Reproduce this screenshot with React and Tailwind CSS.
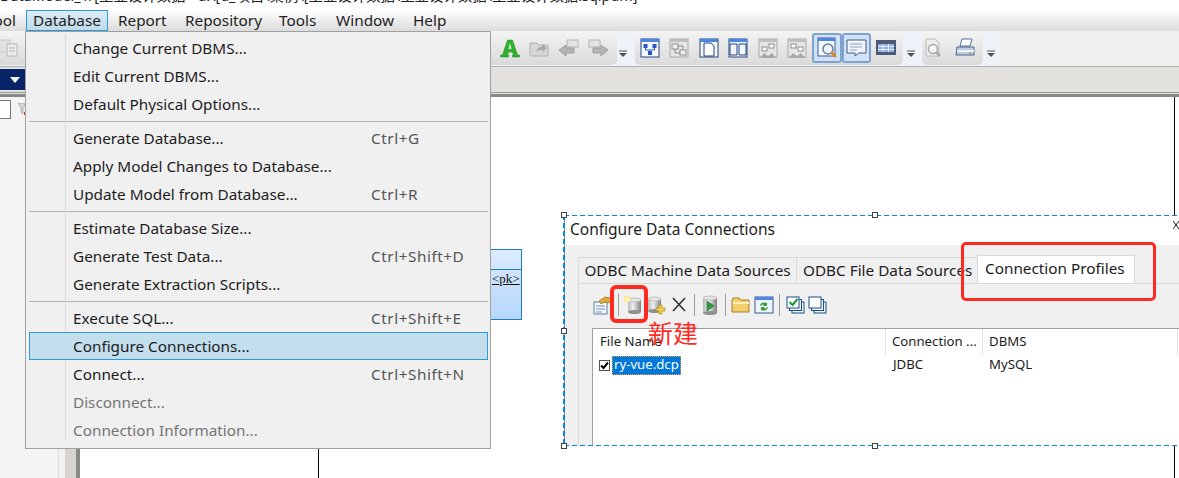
import React from 'react';

const UI_FONT = 'font-["Noto_Sans","Open_Sans",sans-serif]';

const MENU_GROUPS = [
  [
    { label: 'Change Current DBMS...' },
    { label: 'Edit Current DBMS...' },
    { label: 'Default Physical Options...' },
  ],
  [
    { label: 'Generate Database...', keys: 'Ctrl+G' },
    { label: 'Apply Model Changes to Database...' },
    { label: 'Update Model from Database...', keys: 'Ctrl+R' },
  ],
  [
    { label: 'Estimate Database Size...' },
    { label: 'Generate Test Data...', keys: 'Ctrl+Shift+D' },
    { label: 'Generate Extraction Scripts...' },
  ],
  [
    { label: 'Execute SQL...', keys: 'Ctrl+Shift+E' },
    { label: 'Configure Connections...', active: true },
    { label: 'Connect...', keys: 'Ctrl+Shift+N' },
    { label: 'Disconnect...', disabled: true },
    { label: 'Connection Information...', disabled: true },
  ],
];

const MENU_BAR = [
  { label: 'Report', width: 'w-[67px]' },
  { label: 'Repository', width: 'w-[94px]' },
  { label: 'Tools', width: 'w-[57px]' },
  { label: 'Window', width: 'w-[77px]' },
  { label: 'Help', width: 'w-[50px]' },
];

const Svg = ({ children, size = 22 }) => (
  <svg width={size} height={size} viewBox="0 0 22 22" fill="none" className="shrink-0">
    {children}
  </svg>
);

// blue framed diagram window used by the toolbar
const DiagramFrame = ({ muted, children }) => (
  <Svg>
    <rect x="2" y="2" width="18" height="18" fill={muted ? '#e6e6e6' : '#f6f9fe'} stroke={muted ? '#a8a8a8' : '#24427f'} />
    <rect x="2" y="2" width="18" height="3" fill={muted ? '#c0c0c0' : '#4c86e0'} />
    {children}
  </Svg>
);

const IconA = () => (
  <Svg>
    <path d="M8.500 3h5l5 15h2v2h-7v-2h1l-1-3H9.500l-1 3h1v2h-8v-2h2z" fill="#2fb02f" stroke="#1c8a1c" strokeWidth=".5" />
    <path d="M11 6l-1.500 6h3z" fill="#e8f7e8" />
  </Svg>
);
const IconFolderUp = () => (
  <Svg>
    <path d="M2 6h7l2 2h9v11H2z" fill="#d6d6d6" stroke="#b0b0b0" />
    <path d="M8 15c1-4 3-5 6-5V7l5 4-5 4v-2c-2 0-4 0-6 2z" fill="#a8a8a8" />
  </Svg>
);
const IconArrowLeft = () => (
  <Svg>
    <rect x="9" y="3" width="11" height="7" fill="#e4e4e4" stroke="#b2b2b2" />
    <path d="M1 13l7-5v3h8v5H8v3z" fill="#b4b4b4" stroke="#a0a0a0" />
  </Svg>
);
const IconArrowRight = () => (
  <Svg>
    <rect x="2" y="3" width="11" height="7" fill="#e4e4e4" stroke="#b2b2b2" />
    <path d="M21 13l-7-5v3H6v5h8v3z" fill="#b4b4b4" stroke="#a0a0a0" />
  </Svg>
);
const IconEntities = () => (
  <DiagramFrame>
    <rect x="4.500" y="7" width="4" height="4" fill="#2b55c8" />
    <rect x="13.500" y="7" width="4" height="4" fill="#2b55c8" />
    <rect x="9" y="14" width="4" height="4" fill="#2b55c8" />
    <path d="M6.500 11v2h4.500M15.500 11v2h-4.500" stroke="#2b55c8" />
  </DiagramFrame>
);
const IconLinks = () => (
  <DiagramFrame muted>
    <rect x="4" y="7" width="6" height="5" fill="#f2f2f2" stroke="#8c8c8c" />
    <rect x="12" y="13" width="6" height="5" fill="#f2f2f2" stroke="#8c8c8c" />
    <path d="M10 9h5v4M7 12v4h5" stroke="#8c8c8c" />
  </DiagramFrame>
);
const IconPage = () => (
  <DiagramFrame>
    <path d="M6 6h7l3 3v10H6z" fill="#fff" stroke="#24427f" />
  </DiagramFrame>
);
const IconPages = () => (
  <DiagramFrame>
    <path d="M3 7h7v11H3zM12 7h7v11h-7z" fill="#f2f6fd" stroke="#24427f" />
  </DiagramFrame>
);
const IconBranch = ({ flip }) => (
  <DiagramFrame muted>
    <rect x={flip ? 5 : 12} y="7" width="5" height="4" fill="#fff" stroke="#8c8c8c" />
    <rect x={flip ? 12 : 5} y="10" width="5" height="4" fill="#fff" stroke="#8c8c8c" />
    <path d="M3 21l4-5 4 3 4-3 4 5z" fill="#a8a8a8" />
  </DiagramFrame>
);
const IconSearchWin = () => (
  <Svg>
    <rect x="2" y="1" width="17" height="18" fill="#f4f8fe" stroke="#3a5a92" />
    <rect x="2" y="1" width="17" height="3" fill="#4c86e0" />
    <circle cx="12" cy="12" r="5" fill="#eef4fb" stroke="#6a7f99" strokeWidth="1.500" />
    <path d="M16 16l3 3" stroke="#d98a2b" strokeWidth="3" strokeLinecap="round" />
  </Svg>
);
const IconNote = () => (
  <Svg>
    <path d="M2 3h19v13h-7l-4 3v-3H2z" fill="#eef4fb" stroke="#4a5d78" />
    <path d="M5 7h12M5 10h12M5 13h7" stroke="#94a3b5" />
  </Svg>
);
const IconTable = () => (
  <Svg>
    <rect x="1" y="3" width="20" height="15" fill="#4d5a75" />
    <path d="M3 7h16v8H3z" fill="#8fb0ea" />
    <path d="M3 9.500h16M3 12.500h16M8 7v8M13.500 7v8" stroke="#e8eefa" />
  </Svg>
);
const IconPreview = () => (
  <Svg>
    <path d="M4 2h9l4 4v13H4z" fill="#ececec" stroke="#bababa" />
    <circle cx="11" cy="12" r="4.500" fill="#f4f4f4" stroke="#a8a8a8" strokeWidth="1.500" />
    <path d="M14 15l4 4" stroke="#a8a8a8" strokeWidth="2.500" />
  </Svg>
);
const IconPrinter = () => (
  <Svg>
    <path d="M8 2h10l-2 7H6z" fill="#fff" stroke="#5a7396" />
    <path d="M3 10h17v8H2z" fill="#b9cde6" stroke="#4d6485" />
    <path d="M3 14h17" stroke="#eef3fa" strokeWidth="2" />
    <rect x="15" y="15.500" width="2" height="1.500" fill="#d98a2b" />
  </Svg>
);
const IconCopy = () => (
  <Svg>
    <rect x="-2" y="3" width="12" height="12" fill="#e2e2e2" stroke="#c8c8c8" />
    <rect x="7" y="7" width="10" height="12" fill="#ececec" stroke="#b8b8b8" />
    <path d="M9 11h6M9 14h6" stroke="#b0b0b0" />
  </Svg>
);

const Cylinder = ({ x = 4, y = 3, w = 12, h = 15 }) => (
  <g>
    <rect x={x} y={y + 2} width={w} height={h - 3} fill="url(#cylinderGray)" />
    <ellipse cx={x + w / 2} cy={y + h - 1} rx={w / 2} ry="2" fill="#8f8f8f" />
    <ellipse cx={x + w / 2} cy={y + 2} rx={w / 2} ry="2" fill="#e4e4e4" stroke="#a5a5a5" strokeWidth=".6" />
  </g>
);

const IconProperties = () => (
  <Svg>
    <rect x="2" y="8" width="13" height="12" fill="#f5f8fd" stroke="#5d7ba5" />
    <path d="M4 12h9M4 15h9M4 18h6" stroke="#6d8cc0" />
    <path d="M7 7l6-4 6 1 2 3-5 2-3-1-4 2z" fill="#e0a93a" stroke="#8a6a1e" strokeWidth=".6" />
  </Svg>
);
const IconNewDb = () => (
  <Svg>
    <Cylinder x={6} y={4} w={13} h={15} />
    <path d="M2 2h6v6H2z" fill="#f6e27a" />
    <path d="M5 1.500v7M1.500 5h7M2.500 2.500l5 5M7.500 2.500l-5 5" stroke="#fff7c4" />
  </Svg>
);
const IconAddDb = () => (
  <Svg>
    <Cylinder x={3} y={3} w={13} h={15} />
    <path d="M14 11h3v3h3v3h-3v3h-3v-3h-3v-3h3z" fill="#f2d34a" stroke="#a88a22" strokeWidth=".7" />
  </Svg>
);
const IconDelete = () => (
  <Svg>
    <path d="M5 4l12 13M17 4L5 17" stroke="#333" strokeWidth="1.600" />
  </Svg>
);
const IconPlayDb = () => (
  <Svg>
    <Cylinder x={4} y={2} w={14} h={18} />
    <path d="M8 7l7 5-7 5z" fill="#2f9a3d" stroke="#1d6e28" strokeWidth=".6" />
  </Svg>
);
const IconFolder = () => (
  <Svg>
    <path d="M2 6l1-2h6l2 2h8v12H2z" fill="#f2cf6c" stroke="#a5812a" />
    <path d="M3 9h16" stroke="#fdf0bb" strokeWidth="2" />
  </Svg>
);
const IconRefreshWin = () => (
  <Svg>
    <rect x="2" y="3" width="18" height="16" fill="#eef4fb" stroke="#3a5a92" />
    <rect x="2" y="3" width="18" height="3" fill="#4c86e0" />
    <path d="M7 12a4 4 0 016-3l1-1v4h-4l1-1a2 2 0 00-3 1zM15 13a4 4 0 01-6 3l-1 1v-4h4l-1 1a2 2 0 003-1z" fill="#3f9a35" />
  </Svg>
);
const IconCheckStack = () => (
  <Svg>
    <rect x="7" y="8" width="12" height="11" fill="#eef4fb" stroke="#1d4f86" />
    <rect x="4.500" y="5.500" width="12" height="11" fill="#eef4fb" stroke="#1d4f86" />
    <rect x="2" y="3" width="12" height="11" fill="#fff" stroke="#1d4f86" />
    <path d="M4.500 8l3 3 5-6" stroke="#169a35" strokeWidth="2" />
  </Svg>
);
const IconStack = () => (
  <Svg>
    <rect x="7" y="8" width="12" height="11" fill="#eef4fb" stroke="#1d4f86" />
    <rect x="4.500" y="5.500" width="12" height="11" fill="#eef4fb" stroke="#1d4f86" />
    <rect x="2" y="3" width="12" height="11" fill="#fff" stroke="#1d4f86" />
  </Svg>
);

const ToolSlot = ({ children, active }) => (
  <div
    className={`w-[29.5px] h-[30px] shrink-0 flex items-center justify-center ${
      active ? 'rounded-[3px] border-2 border-[#7fa3cc] bg-[#cfe2fa]' : ''
    }`}
  >
    {children}
  </div>
);

const Chevron = () => (
  <svg width="8" height="8" viewBox="0 0 8 8" className="mt-[19px]">
    <path d="M0 1h8" stroke="#555" />
    <path d="M0 3h8L4 7z" fill="#555" />
  </svg>
);

const ToolGroup = ({ className, children }) => (
  <div className={`h-[34px] flex items-center bg-gradient-to-b from-[#f4f4f4] to-[#dadada] ${className}`}>
    {children}
  </div>
);

const DbMenu = () => (
  <div className="absolute left-[25px] top-[31px] w-[466px] h-[418px] bg-[#f0f0f0] border border-[#a0a0a0] pt-[2px] pb-[4px] pl-[3px] pr-[2px] text-[15.3px] leading-[28px] text-[#1c1c1c]">
    <div className="absolute left-[39px] top-[2px] bottom-[8px] w-px bg-[#d8d8d8]" />
    {MENU_GROUPS.map((group, i) => (
      <div key={i}>
        {i > 0 && <div className="h-[6px] flex items-center"><div className="w-full h-px bg-[#b4b4b4]" /></div>}
        {group.map((item) => (
          <div
            key={item.label}
            className={`relative h-[28px] flex ${item.disabled ? 'text-[#757575]' : ''} ${
              item.active ? 'border border-[#2e9bd8] bg-[#bedcec]/90 pl-[43px] leading-[26px]' : 'pl-[44px]'
            }`}
          >
            <span className="w-[298px] whitespace-nowrap">{item.label}</span>
            {item.keys && <span className="text-[#555] whitespace-nowrap tracking-[0.55px]">{item.keys}</span>}
          </div>
        ))}
      </div>
    ))}
  </div>
);

const DashH = ({ className }) => (
  <div className={`absolute h-px bg-[repeating-linear-gradient(90deg,#0a84d6_0_5px,transparent_5px_8px)] ${className}`} />
);

const Handle = ({ className }) => (
  <div className={`absolute w-[6px] h-[6px] border border-[#444] bg-white ${className}`} />
);

const Sep = ({ className = 'mx-[4px]' }) => <div className={`w-px h-[22px] bg-[#9a9a9a] ${className}`} />;

const ConnectionsDialog = () => (
  <div className="absolute left-[564px] top-[215px] w-[615px] h-[231px] bg-white text-[15.3px] text-[#1c1c1c]">
    <div className="h-[30px] pl-[5px] pb-[2px] flex items-center border-l border-[#8a8a8a] text-[15.5px] leading-[28px] whitespace-nowrap">
      Configure Data Connections
    </div>
    <div className="h-[201px] bg-[#f0f0f0] border-l border-[#8a8a8a] pl-[13px] pt-[10px] flex flex-col">
      <div className="h-[28px] flex items-end">
        <div className="h-[26px] w-[219px] flex items-center justify-center border border-b-0 border-[#d9d9d9] whitespace-nowrap">
          ODBC Machine Data Sources
        </div>
        <div className="h-[26px] w-[180px] pl-[6px] flex items-center border-t border-[#d9d9d9] whitespace-nowrap overflow-hidden">
          ODBC File Data Sources
        </div>
        <div className="h-[28px] w-[158px] pl-[7px] pb-[3px] flex items-center bg-white border border-b-0 border-[#d9d9d9] whitespace-nowrap">
          Connection Profiles
        </div>
      </div>
      <div className="flex-1 border-t border-l border-[#d9d9d9] pl-[13px] flex flex-col">
        <div className="h-[44px] flex items-center pb-[2px]">
          <IconProperties />
          <Sep className="ml-[4px] mr-[3px]" />
          <IconNewDb />
          <div className="w-px" />
          <IconAddDb />
          <div className="w-px" />
          <IconDelete />
          <Sep />
          <IconPlayDb />
          <Sep />
          <IconFolder />
          <div className="w-px" />
          <IconRefreshWin />
          <Sep className="ml-[4px] mr-[5px]" />
          <IconCheckStack />
          <IconStack />
        </div>
        <div className="flex-1 bg-white border-t border-l border-[#a0a0a0] text-[13.2px]">
          <div className="h-[26px] flex items-center">
            <div className="w-[293px] h-full pl-[7px] flex items-center border-r border-[#e2e2e2]">File Name</div>
            <div className="w-[97px] h-full pl-[6px] flex items-center border-r border-[#e2e2e2] whitespace-nowrap overflow-hidden">Connection ...</div>
            <div className="w-[195px] h-full pl-[6px] flex items-center border-r border-[#e2e2e2]">DBMS</div>
          </div>
          <div className="h-[20px] flex items-center">
            <div className="w-[293px] pl-[6px] flex items-center">
              <div className="w-[11px] h-[11px] border border-[#555] flex items-center justify-center">
                <svg width="9" height="9" viewBox="0 0 9 9"><path d="M1 4.500l2.500 2.500L8 1.500" stroke="#000" strokeWidth="2" fill="none" /></svg>
              </div>
              <div className="ml-[2px] h-[19px] px-[2px] flex items-center bg-[#0078d7] text-white outline-1 outline-dotted outline-[#e8a23a] -outline-offset-1">
                ry-vue.dcp
              </div>
            </div>
            <div className="w-[97px] pl-[7px]">JDBC</div>
            <div className="pl-[6px]">MySQL</div>
          </div>
        </div>
      </div>
    </div>
    <svg width="6" height="8" viewBox="0 0 6 8" className="absolute right-0 top-[6px]">
      <path d="M0 0l6 8M6 0L0 8" stroke="#222" />
    </svg>
    <DashH className="left-0 right-0 top-0" />
    <DashH className="left-0 right-0 bottom-0" />
    <div className="absolute left-[-1px] top-0 bottom-0 w-[2px] bg-[repeating-linear-gradient(180deg,#0a84d6_0_5px,transparent_5px_8px)]" />
    <Handle className="left-[-3px] top-[-3px]" />
    <Handle className="left-[308px] top-[-3px]" />
    <Handle className="left-[-3px] top-[113px]" />
    <Handle className="left-[-3px] bottom-[-3px]" />
    <Handle className="left-[308px] bottom-[-3px]" />
  </div>
);

export default function App() {
  return (
    <div className={`relative w-[1179px] h-[478px] overflow-hidden bg-white ${UI_FONT}`}>
      <svg className="absolute w-0 h-0">
        <defs>
          <linearGradient id="cylinderGray" x1="0" x2="1" y1="0" y2="0">
            <stop offset="0" stopColor="#b9b9b9" />
            <stop offset=".4" stopColor="#f0f0f0" />
            <stop offset="1" stopColor="#7f7f7f" />
          </linearGradient>
        </defs>
      </svg>

      {/* clipped window title */}
      <div className="h-[10px] overflow-hidden">
        <div className="-mt-[13px] text-[14.4px] leading-[18px] whitespace-nowrap text-[#222] font-['Noto_Sans','Noto_Sans_CJK_SC',sans-serif]">
          DataModel_1/[工业设计数据 - d:\[d_项目\案例\[工业设计数据\工业设计数据\工业设计数据.sqlpdm]
        </div>
      </div>

      {/* menu bar */}
      <div className="h-[21px] flex items-center text-[15.3px] text-[#222] bg-gradient-to-b from-white to-[#dcdcdc]">
        <div className="w-[26px] -ml-[14px] mr-[6px] whitespace-nowrap shrink-0">Tool</div>
        <div className="w-[82px] ml-[8px] h-[21px] flex items-center justify-center bg-gradient-to-b from-[#dcebf4] to-[#bedaeb] border border-[#2e9bd8]">
          Database
        </div>
        <div className="w-[10px]" />
        {MENU_BAR.map((m) => (
          <div key={m.label} className={m.width}>{m.label}</div>
        ))}
      </div>

      {/* toolbars */}
      <div className="h-[36px] flex bg-[#eef3fa] border-b border-[#b0b0b0]">
        <ToolGroup className="w-[617px] rounded-r-[5px] justify-between pr-[4px]">
          <IconCopy />
          <div className="flex">
            <ToolSlot><IconA /></ToolSlot>
            <ToolSlot><IconFolderUp /></ToolSlot>
            <ToolSlot><IconArrowLeft /></ToolSlot>
            <ToolSlot><IconArrowRight /></ToolSlot>
          </div>
        </ToolGroup>
        <div className="w-[18px] pl-[2px]"><Chevron /></div>
        <ToolGroup className="w-[268px] rounded-[5px]">
          <ToolSlot><IconEntities /></ToolSlot>
          <ToolSlot><IconLinks /></ToolSlot>
          <ToolSlot><IconPage /></ToolSlot>
          <ToolSlot><IconPages /></ToolSlot>
          <ToolSlot><IconBranch /></ToolSlot>
          <ToolSlot><IconBranch flip /></ToolSlot>
          <ToolSlot active><IconSearchWin /></ToolSlot>
          <ToolSlot active><IconNote /></ToolSlot>
          <ToolSlot><IconTable /></ToolSlot>
        </ToolGroup>
        <div className="w-[19px] pl-[4px]"><Chevron /></div>
        <ToolGroup className="w-[61px] gap-[10px] rounded-[5px]">
          <IconPreview />
          <IconPrinter />
        </ToolGroup>
        <div className="w-[17px] pl-[4px]"><Chevron /></div>
        <div className="flex-1 bg-[#f0f0f0]" />
      </div>

      {/* tab strip and canvas */}
      <div className="h-[25px] bg-[#e4e2de]" />
      <div className="h-[5px] border-t border-[#999] border-b-[3px] border-b-[#888] bg-[#e4e2de]" />

      <div className="relative h-[381px]">
        {/* left dock */}
        <div className="absolute left-0 top-[-28px] w-[25px] h-[21px] bg-[#0a246a] flex items-center justify-end pr-[5px]">
          <svg width="10" height="6" viewBox="0 0 10 6"><path d="M0 0h10L5 6z" fill="#fff" /></svg>
        </div>
        <div className="absolute left-0 top-0 w-[80px] h-[381px] flex">
          <div className="w-[58px] bg-[#f4f4f4]">
            <div className="flex items-start">
              <div className="mt-[3px] w-[11px] h-[19px] bg-white border border-[#777] border-l-0" />
              <svg width="8" height="12" viewBox="0 0 8 12" className="ml-[7px] mt-[6px]">
                <path d="M0 0h8L5 5v6L3 9V5z" fill="#d8d8d8" stroke="#8a8a8a" strokeWidth=".6" />
                <path d="M6 9h2v3H6z" fill="#e23a2a" />
              </svg>
            </div>
          </div>
          <div className="w-[7px] bg-[#f2f2f2] border-l border-[#ddd]" />
          <div className="w-[11px] bg-[#d8d5ce]" />
          <div className="w-[4px] bg-[#888]" />
        </div>
        <div className="absolute left-[318px] top-0 bottom-0 w-px bg-black" />
        <div className="absolute left-[1174px] top-0 bottom-0 w-px bg-black" />
      </div>

      {/* entity box on the canvas */}
      <div className="absolute left-[480px] top-[249px] w-[42px] h-[71px] border border-[#1e7fb8] bg-gradient-to-b from-[#dcebff] to-[#b5d6fb] font-['Liberation_Serif',serif] text-[13px] leading-[18px] text-[#111]">
        <div className="h-[20px] border-b border-[#1e7fb8]" />
        <div className="pl-[11px] underline">&lt;pk&gt;</div>
      </div>

      <ConnectionsDialog />
      <DbMenu />

      {/* red annotations */}
      <div className="absolute left-[610px] top-[285px] w-[38px] h-[38px] border-[4px] border-[#ff2a1f] rounded-[6px]" />
      <div className="absolute left-[961px] top-[242px] w-[195px] h-[59px] border-[3px] border-[#ff2a1f] rounded-[5px]" />
      <div className="absolute left-[648px] top-[316px] text-[25px] leading-[32px] text-[#ff2a1f] font-['Noto_Sans_CJK_SC',sans-serif]">
        新建
      </div>
    </div>
  );
}
